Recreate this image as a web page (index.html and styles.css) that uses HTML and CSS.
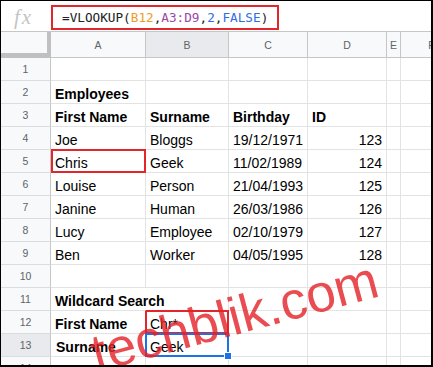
FILE: index.html
```html
<!DOCTYPE html>
<html>
<head>
<meta charset="utf-8">
<link rel="stylesheet" href="styles.css">
</head>
<body>
<div class="frame">
  <div class="fbar">
    <div class="fx">fx</div>
    <div class="formula">=VLOOKUP(<span class="c-or">B12</span>,<span class="c-pu">A3:D9</span>,<span class="c-bl">2</span>,<span class="c-bl">FALSE</span>)</div>
  </div>
  <div class="sheet">
    <div class="corner"></div>
    <div class="ch">A</div>
    <div class="ch sel">B</div>
    <div class="ch">C</div>
    <div class="ch">D</div>
    <div class="ch">E</div>
    <div class="ch">F</div>

    <div class="rh">1</div><div class="c"></div><div class="c"></div><div class="c"></div><div class="c"></div><div class="c"></div><div class="c"></div>
    <div class="rh">2</div><div class="c b">Employees</div><div class="c"></div><div class="c"></div><div class="c"></div><div class="c"></div><div class="c"></div>
    <div class="rh">3</div><div class="c b">First Name</div><div class="c b">Surname</div><div class="c b">Birthday</div><div class="c b">ID</div><div class="c"></div><div class="c"></div>
    <div class="rh">4</div><div class="c">Joe</div><div class="c">Bloggs</div><div class="c">19/12/1971</div><div class="c num">123</div><div class="c"></div><div class="c"></div>
    <div class="rh">5</div><div class="c mark-a">Chris</div><div class="c">Geek</div><div class="c">11/02/1989</div><div class="c num">124</div><div class="c"></div><div class="c"></div>
    <div class="rh">6</div><div class="c">Louise</div><div class="c">Person</div><div class="c">21/04/1993</div><div class="c num">125</div><div class="c"></div><div class="c"></div>
    <div class="rh">7</div><div class="c">Janine</div><div class="c">Human</div><div class="c">26/03/1986</div><div class="c num">126</div><div class="c"></div><div class="c"></div>
    <div class="rh">8</div><div class="c">Lucy</div><div class="c">Employee</div><div class="c">02/10/1979</div><div class="c num">127</div><div class="c"></div><div class="c"></div>
    <div class="rh">9</div><div class="c">Ben</div><div class="c">Worker</div><div class="c">04/05/1995</div><div class="c num">128</div><div class="c"></div><div class="c"></div>
    <div class="rh">10</div><div class="c"></div><div class="c"></div><div class="c"></div><div class="c"></div><div class="c"></div><div class="c"></div>
    <div class="rh">11</div><div class="c b spill">Wildcard Search</div><div class="c"></div><div class="c"></div><div class="c"></div><div class="c"></div><div class="c"></div>
    <div class="rh">12</div><div class="c b">First Name</div><div class="c mark-b">Chr*</div><div class="c"></div><div class="c"></div><div class="c"></div><div class="c"></div>
    <div class="rh sel">13</div><div class="c b indent">Surname</div><div class="c active">Geek</div><div class="c"></div><div class="c"></div><div class="c"></div><div class="c"></div>
    <div class="rh">14</div><div class="c"></div><div class="c"></div><div class="c"></div><div class="c"></div><div class="c"></div><div class="c"></div>
  </div>
  <div class="wm">techblik.com</div>
</div>
</body>
</html>
```

FILE: styles.css
```css
html, body {
  margin: 0;
  padding: 0;
  background: #ffffff;
}

.frame {
  position: relative;
  width: 433px;
  height: 367px;
  box-sizing: border-box;
  border-top: 1px solid #000;
  border-left: 1px solid #000;
  border-right: 2px solid #000;
  border-bottom: 2px solid #000;
  overflow: hidden;
  background: #fff;
  font-family: "Liberation Sans", Arial, sans-serif;
}

.fbar {
  border-bottom: 1px solid #c4c7c5;
  display: flex;
  align-items: flex-start;
  padding-top: 4px;
  box-sizing: content-box;
  height: 26px;
}

.fx {
  width: 50px;
  height: 24px;
  font-family: "Liberation Serif", "Times New Roman", serif;
  font-style: italic;
  font-size: 21px;
  letter-spacing: 2px;
  color: #c4c4c4;
  padding-left: 13px;
  box-sizing: border-box;
  line-height: 24px;
}

.formula {
  width: 228px;
  height: 25px;
  box-sizing: border-box;
  border: 2px solid #e3262b;
  display: flex;
  align-items: center;
  padding-left: 9px;
  font-family: "DejaVu Sans Mono", "Liberation Mono", monospace;
  font-size: 12.7px;
  color: #202124;
  white-space: nowrap;
}

.c-or { color: #f29a1f; }
.c-pu { color: #9c47a8; }
.c-bl { color: #2f6fde; }

.sheet {
  display: grid;
  grid-template-columns: 50px 95px 83px 79px 79px 14px 62px;
  grid-template-rows: 26px;
  grid-auto-rows: 23px;
}

.corner {
  background: #f8f9fa;
  border-right: 4px solid #c0c0c0;
  border-bottom: 5px solid #c0c0c0;
  box-sizing: border-box;
}

.ch {
  background: #f8f9fa;
  border-right: 1px solid #c4c7c5;
  border-bottom: 1px solid #c4c7c5;
  box-sizing: border-box;
  display: flex;
  align-items: center;
  justify-content: center;
  font-size: 10.5px;
  color: #5f6368;
}

.rh {
  background: #f8f9fa;
  border-right: 1px solid #c4c7c5;
  border-bottom: 1px solid #dadce0;
  box-sizing: border-box;
  display: flex;
  align-items: center;
  justify-content: center;
  font-size: 10.5px;
  color: #5f6368;
}

.sel {
  background: #e8eaed;
}

.c {
  position: relative;
  box-sizing: border-box;
  border-right: 1px solid #e2e3e3;
  border-bottom: 1px solid #e2e3e3;
  display: flex;
  align-items: flex-end;
  padding: 0 3px 1px 4px;
  font-size: 14px;
  line-height: 16px;
  color: #000;
  white-space: nowrap;
}

.b { font-weight: bold; }
.num { justify-content: flex-end; padding-right: 4px; }
.spill { border-right-color: transparent; z-index: 1; }
.indent { padding-left: 5px; }

.mark-a::after,
.mark-b::after,
.active::after {
  content: "";
  position: absolute;
  top: -1px;
  left: -1px;
  right: -1px;
  bottom: -1px;
  border: 2px solid #e3262b;
}

.mark-a::after {
  left: 0;
}

.active::after {
  border-color: #1a73e8;
}

.active::before {
  content: "";
  position: absolute;
  right: -4px;
  bottom: -4px;
  width: 6px;
  height: 6px;
  background: #1a73e8;
  border: 1px solid #fff;
  z-index: 2;
}

.wm {
  position: absolute;
  left: 96px;
  top: 326px;
  font-family: "Liberation Sans", Arial, sans-serif;
  font-size: 53px;
  line-height: 53px;
  color: rgba(227, 32, 38, 0.8);
  white-space: nowrap;
  transform: rotate(-15deg);
  transform-origin: 0 45px;
  pointer-events: none;
  z-index: 5;
}
```
